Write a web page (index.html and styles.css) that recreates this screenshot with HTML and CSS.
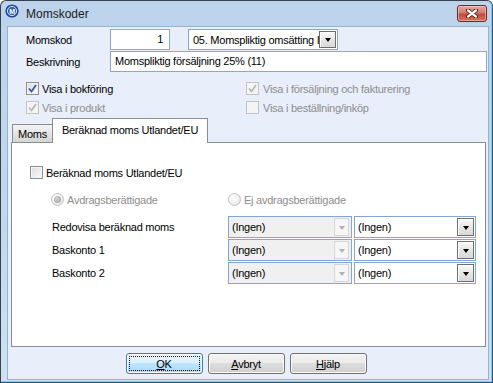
FILE: index.html
```html
<!DOCTYPE html>
<html lang="sv">
<head>
  <meta charset="UTF-8" />
  <title>Momskoder</title>
  <link rel="stylesheet" href="styles.css">
</head>
<body>
  <div class="window">
    <div class="titlebar">
      <svg class="app-icon" width="16" height="16" viewBox="0 0 16 16">
        <circle cx="8" cy="8" r="6.6" fill="#1d4790" />
        <circle cx="8" cy="8" r="4.6" fill="#2f63b8" stroke="#e9f1ff" stroke-width="0.9" />
        <text x="8" y="10.5" text-anchor="middle" font-family="Liberation Sans, sans-serif" font-weight="bold" font-size="7" fill="#ffffff">M</text>
      </svg>
      <span class="title">Momskoder</span>
      <button class="close-btn" aria-label="Stäng">
        <svg width="12" height="9" viewBox="0 0 12 9">
          <path d="M2 1.5 L10 7.5 M10 1.5 L2 7.5" stroke="#4a1410" stroke-width="4" stroke-linecap="round" />
          <path d="M2 1.5 L10 7.5 M10 1.5 L2 7.5" stroke="#ffffff" stroke-width="2.2" stroke-linecap="round" />
        </svg>
      </button>
    </div>

    <div class="client">
      <div class="field-row first">
        <span class="field-label">Momskod</span>
        <div class="textbox num">1</div>
        <div class="combo top-combo">
          <span class="combo-text">05. Momspliktig omsätting I</span>
          <span class="drop-btn"><i class="arrow"></i></span>
        </div>
      </div>
      <div class="field-row">
        <span class="field-label">Beskrivning</span>
        <div class="textbox wide">Momspliktig försäljning 25% (11)</div>
      </div>

      <div class="check-grid">
        <label class="check">
          <span class="box"><svg width="11" height="11" viewBox="0 0 11 11"><path d="M2 5.5 L4.5 8.5 L9 2" fill="none" stroke="#3d5a9e" stroke-width="1.8" /></svg></span>
          Visa i bokföring
        </label>
        <label class="check disabled right">
          <span class="box"><svg width="11" height="11" viewBox="0 0 11 11"><path d="M2 5.5 L4.5 8.5 L9 2" fill="none" stroke="#b4b4b4" stroke-width="1.6" /></svg></span>
          Visa i försäljning och fakturering
        </label>
        <label class="check disabled">
          <span class="box"><svg width="11" height="11" viewBox="0 0 11 11"><path d="M2 5.5 L4.5 8.5 L9 2" fill="none" stroke="#b4b4b4" stroke-width="1.6" /></svg></span>
          Visa i produkt
        </label>
        <label class="check disabled right">
          <span class="box"></span>
          Visa i beställning/inköp
        </label>
      </div>

      <div class="tabs">
        <div class="tab-strip">
          <div class="tab">Moms</div>
          <div class="tab active">Beräknad moms Utlandet/EU</div>
        </div>
        <div class="tab-panel">
          <label class="check">
            <span class="box"></span>
            Beräknad moms Utlandet/EU
          </label>

          <div class="pair-grid radio-row">
            <label class="radio disabled"><span class="dot selected"></span>Avdragsberättigade</label>
            <label class="radio disabled"><span class="dot"></span>Ej avdragsberättigade</label>
          </div>

          <div class="pair-grid combo-rows">
            <span class="row-label">Redovisa beräknad moms</span>
            <div class="combo locked"><span class="combo-text">(Ingen)</span><span class="drop-btn"><i class="arrow"></i></span></div>
            <div class="combo"><span class="combo-text">(Ingen)</span><span class="drop-btn"><i class="arrow"></i></span></div>

            <span class="row-label">Baskonto 1</span>
            <div class="combo locked"><span class="combo-text">(Ingen)</span><span class="drop-btn"><i class="arrow"></i></span></div>
            <div class="combo"><span class="combo-text">(Ingen)</span><span class="drop-btn"><i class="arrow"></i></span></div>

            <span class="row-label">Baskonto 2</span>
            <div class="combo locked"><span class="combo-text">(Ingen)</span><span class="drop-btn"><i class="arrow"></i></span></div>
            <div class="combo"><span class="combo-text">(Ingen)</span><span class="drop-btn"><i class="arrow"></i></span></div>
          </div>
        </div>
      </div>

      <div class="button-row">
        <button class="win-btn default"><u>O</u>K</button>
        <button class="win-btn"><u>A</u>vbryt</button>
        <button class="win-btn"><u>H</u>jälp</button>
      </div>
    </div>
  </div>
</body>
</html>
```

FILE: styles.css
```css
/* Base */
* {
  box-sizing: border-box;
}
body {
  margin: 0;
  font-family: "Liberation Sans", Arial, sans-serif;
  font-size: 11px;
  letter-spacing: -0.25px;
  color: #000;
  background: #fff;
}

/* Window frame */
.window {
  width: 493px;
  height: 383px;
  border: 1px solid #34414f;
  border-right-color: #1f5a86;
  border-bottom-color: #1f5a86;
  border-radius: 6px 6px 0 0;
  background: linear-gradient(#bcd3eb, #c2d8ee 60%, #cde2f3);
  box-shadow: inset -1px -1px 0 #7fcbed;
  padding: 0 3px 2px 6px;
  display: flex;
  flex-direction: column;
}
.titlebar {
  height: 25px;
  margin: 0 -3px 0 -6px;
  padding-left: 3px;
  display: flex;
  align-items: center;
}
.app-icon {
  display: block;
  flex-shrink: 0;
  margin-top: -6px;
}
.title {
  margin-left: 6px;
  font-size: 12px;
  letter-spacing: 0;
  color: #1b1b1b;
}
.close-btn {
  margin-left: auto;
  margin-right: 5px;
  margin-top: -1px;
  width: 30px;
  height: 17px;
  padding: 0;
  border: 1px solid #6b2a25;
  border-radius: 3px;
  background: linear-gradient(#e8a99f, #d47a6e 45%, #c24a3c 55%, #d8715f);
  box-shadow: inset 0 0 0 1px rgba(255, 220, 210, 0.5);
  display: flex;
  align-items: center;
  justify-content: center;
}
.close-btn svg {
  display: block;
}

/* Client area */
.client {
  flex: 1;
  border: 1px solid #98b1cd;
  background: #e8eefa;
  display: flex;
  flex-direction: column;
}

.field-row {
  display: flex;
  align-items: center;
  height: 21px;
  padding-left: 18px;
  margin-top: 1px;
}
.field-row.first {
  margin-top: 2px;
}
.field-label {
  width: 84px;
}
.textbox {
  height: 21px;
  border: 1px solid #85a7da;
  background: #fff;
  line-height: 19px;
  padding: 0 4px;
  white-space: nowrap;
}
.textbox.num {
  width: 60px;
  text-align: right;
  padding-right: 6px;
}
.textbox.wide {
  width: 377px;
}

/* Combo boxes */
.combo {
  position: relative;
  height: 22px;
  border: 1px solid #82a6d9;
  background: #fff;
  display: flex;
  align-items: center;
  overflow: hidden;
}
.combo-text {
  padding-left: 3px;
  white-space: nowrap;
}
.top-combo {
  width: 150px;
  height: 21px;
  margin-left: 18px;
}
.top-combo .combo-text {
  padding-left: 4px;
}
.drop-btn {
  position: absolute;
  right: 1px;
  top: 1px;
  bottom: 1px;
  width: 17px;
  border: 1px solid #6e6e6e;
  background: linear-gradient(#fafafa, #e6e6e6 50%, #d8d8d8);
  box-shadow: inset 1px 1px 0 #fff;
  display: flex;
  align-items: center;
  justify-content: center;
}
.arrow {
  width: 0;
  height: 0;
  border-left: 3.5px solid transparent;
  border-right: 3.5px solid transparent;
  border-top: 4px solid #000;
  margin-top: 1px;
}
.combo.locked {
  background: #f0f0f0;
}
.combo.locked .drop-btn {
  right: 2px;
  width: 15px;
  border-color: #d6d6d6;
  background: #f6f6f6;
  box-shadow: none;
}
.combo.locked .arrow {
  border-top-color: #b0b0b0;
}

/* Check boxes and radios */
.check-grid {
  margin-top: 10px;
  padding-left: 18px;
  display: grid;
  grid-template-columns: 220px auto;
  row-gap: 6px;
}
.check,
.radio {
  display: flex;
  align-items: center;
  height: 13px;
  white-space: nowrap;
}
.check.right .box {
  margin-right: 4px;
}
.box {
  width: 13px;
  height: 13px;
  margin-right: 3px;
  border: 1px solid #8f8f8f;
  background: linear-gradient(135deg, #dcdcdc, #fbfbfb);
  box-shadow: inset 0 0 0 1px #f4f4f4;
  display: flex;
  align-items: center;
  justify-content: center;
}
.box svg {
  display: block;
}
.disabled {
  color: #8d8d8d;
}
.check.disabled .box {
  border-color: #c3c3c3;
  background: #f4f4f4;
  box-shadow: none;
}
.dot {
  width: 13px;
  height: 13px;
  margin-right: 3px;
  border: 1px solid #c1c1c1;
  border-radius: 50%;
  background: radial-gradient(circle at 40% 35%, #ffffff, #e4e4e4);
  display: flex;
  align-items: center;
  justify-content: center;
}
.dot.selected::after {
  content: "";
  width: 7px;
  height: 7px;
  border-radius: 50%;
  background: radial-gradient(circle at 40% 35%, #d2d2d2, #9a9a9a);
}

/* Tabs */
.tabs {
  margin: 4px 2px 0 3px;
}
.tab-strip {
  height: 24px;
  padding-left: 1px;
  display: flex;
  align-items: flex-end;
}
.tab {
  height: 18px;
  width: 41px;
  border: 1px solid #898c95;
  border-bottom: none;
  background: linear-gradient(#f4f4f4, #e4e4e4 50%, #d6d6d6);
  text-align: center;
  line-height: 18px;
}
.tab.active {
  position: relative;
  z-index: 1;
  width: 156px;
  height: 25px;
  margin-left: -1px;
  margin-bottom: -1px;
  background: #fff;
  line-height: 23px;
}
.tab-panel {
  height: 205px;
  border: 1px solid #898c95;
  background: #fff;
  padding: 23px 0 0 18px;
}
.pair-grid {
  margin-left: 21px;
  display: grid;
  grid-template-columns: 175px 124px 122px;
  column-gap: 2px;
}
.radio-row {
  margin-top: 14px;
}
.radio-row .radio:last-child {
  grid-column: span 2;
}
.combo-rows {
  margin-top: 10px;
  row-gap: 1px;
  align-items: center;
}
.row-label {
  padding-left: 1px;
}

/* Dialog buttons */
.button-row {
  margin-top: 6px;
  padding-right: 4px;
  display: flex;
  justify-content: center;
  gap: 5px;
}
.win-btn {
  position: relative;
  width: 77px;
  height: 21px;
  padding: 0;
  font-family: inherit;
  font-size: 11px;
  letter-spacing: inherit;
  color: #000;
  border: 1px solid #707070;
  border-radius: 3px;
  background: linear-gradient(#f2f2f2, #ebebeb 50%, #dddddd 50%, #cfcfcf);
  box-shadow: inset 0 0 0 1px #fbfbfb;
}
.win-btn.default {
  border-color: #3c7fb1;
  background: linear-gradient(#eaf6fd, #d9f0fc 50%, #bee6fd 50%, #a7d9f5);
  box-shadow: inset 0 0 0 1px #f3fbff;
}
.win-btn.default::after {
  content: "";
  position: absolute;
  top: 2px;
  left: 2px;
  right: 2px;
  bottom: 2px;
  border: 1px dotted #1a1a1a;
}
```
